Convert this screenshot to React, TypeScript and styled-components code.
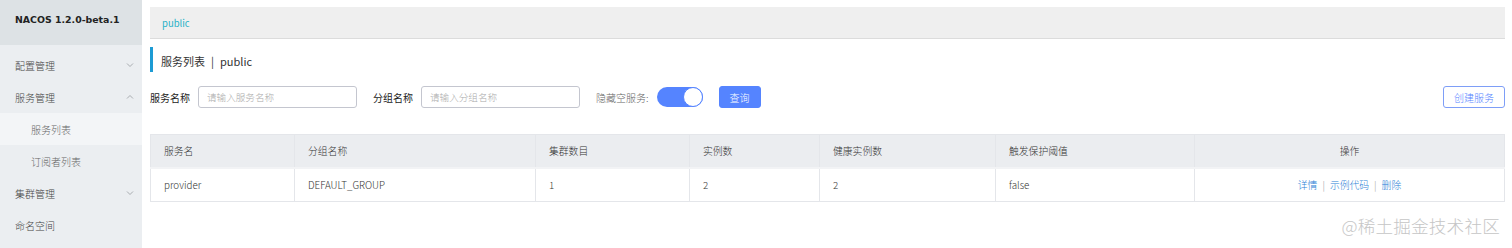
import React, { FC } from "react";
import styled, { createGlobalStyle } from "styled-components";

const colors = {
  text: "#333",
  muted: "#666",
  placeholder: "#aaa",
  primary: "#5584ff",
  link: "#2b7fd6",
  teal: "#27b1c7",
  accent: "#1d9bd4",
  border: "#e4e6ea",
};

const GlobalStyle = createGlobalStyle`
  html, body {
    margin: 0;
    padding: 0;
    height: 248px;
    overflow: hidden;
    background: #fff;
    font-family: "Noto Sans CJK SC", "Noto Sans", sans-serif;
    color: ${colors.text};
  }
  * { box-sizing: border-box; }
`;

const Styled = {
  Page: styled.div`
    position: relative;
    display: flex;
    height: 248px;
  `,
  Sidebar: {
    Base: styled.aside`
      width: 142px;
      flex-shrink: 0;
      background: #ebeef1;
    `,
    Brand: styled.div`
      height: 45px;
      padding: 14px 0 0 15px;
      background: #dde2e5;
      font-family: "DejaVu Sans", sans-serif;
      font-weight: bold;
      font-size: 9.4px;
      color: #222;
    `,
    Menu: styled.ul`
      list-style: none;
      margin: 0;
      padding: 4px 0 0;
    `,
    Item: styled.li<{ $sub?: boolean; $active?: boolean }>`
      display: flex;
      align-items: center;
      justify-content: space-between;
      height: 32px;
      padding: 0 8px 0 ${(p) => (p.$sub ? 31 : 15)}px;
      font-size: 10px;
      font-weight: 300;
      color: ${(p) => (p.$sub ? colors.muted : "#444")};
      background: ${(p) => (p.$active ? "#f3f5f7" : "transparent")};
    `,
  },
  Main: styled.main`
    flex: 1;
    min-width: 0;
    padding: 7px 7px 0 8px;
  `,
  Breadcrumb: styled.div`
    display: flex;
    align-items: center;
    height: 32px;
    padding-left: 12px;
    background: #efefef;
    border-bottom: 1px solid #dcdcdc;
    font-size: 9.5px;
    color: ${colors.teal};
  `,
  Title: styled.h1`
    display: flex;
    align-items: center;
    gap: 6px;
    height: 25px;
    margin: 8px 0 14px;
    padding: 2px 0 0 8px;
    border-left: 3px solid ${colors.accent};
    font-size: 11px;
    font-weight: normal;
    color: ${colors.text};
  `,
  Form: {
    Row: styled.div`
      display: flex;
      align-items: center;
      justify-content: space-between;
      height: 22px;
      margin-bottom: 26px;
    `,
    Group: styled.div`
      display: flex;
      align-items: center;
      gap: 16px;
    `,
    Field: styled.label`
      display: flex;
      align-items: center;
      gap: 8px;
    `,
    Label: styled.span<{ $light?: boolean }>`
      font-size: 10px;
      font-weight: ${(p) => (p.$light ? 300 : 400)};
      color: ${(p) => (p.$light ? colors.muted : "#222")};
    `,
    Input: styled.input`
      width: 159px;
      height: 22px;
      padding: 0 8px;
      border: 1px solid #c4c6cf;
      border-radius: 3px;
      font-family: inherit;
      font-size: 9.6px;
      font-weight: 300;
      outline: none;
      &::placeholder {
        color: ${colors.placeholder};
      }
    `,
  },
  Switch: {
    Track: styled.span`
      display: flex;
      justify-content: flex-end;
      width: 46px;
      height: 20px;
      border-radius: 10px;
      background: ${colors.primary};
    `,
    Knob: styled.span`
      width: 20px;
      height: 20px;
      border-radius: 50%;
      background: #fff;
      border: 1px solid ${colors.primary};
    `,
  },
  Button: styled.button<{ $outline?: boolean }>`
    height: 22px;
    padding: 0 10px;
    border-radius: 3px;
    border: 1px solid ${(p) => (p.$outline ? "#7e9ef7" : colors.primary)};
    background: ${(p) => (p.$outline ? "#fff" : colors.primary)};
    color: ${(p) => (p.$outline ? colors.primary : "#fff")};
    font-family: inherit;
    font-size: 10px;
    font-weight: 300;
  `,
  Table: {
    Base: styled.table`
      width: 100%;
      border-collapse: collapse;
      table-layout: fixed;
      border: 1px solid ${colors.border};
      font-size: 9.8px;
      font-weight: 300;
      color: ${colors.text};
    `,
    Head: styled.th<{ $center?: boolean }>`
      height: 33px;
      padding: 0 13px;
      text-align: ${(p) => (p.$center ? "center" : "left")};
      font-weight: 300;
      background: #ebedf0;
      border: 1px solid ${colors.border};
      border-bottom: 2px solid #f2f3f5;
    `,
    Cell: styled.td<{ $center?: boolean }>`
      height: 34px;
      padding: 0 13px;
      text-align: ${(p) => (p.$center ? "center" : "left")};
      border: 1px solid ${colors.border};
    `,
  },
  Link: styled.a`
    color: ${colors.link};
    text-decoration: none;
  `,
  Sep: styled.span`
    margin: 0 5px;
    color: #999;
  `,
  Watermark: styled.div`
    position: absolute;
    right: 12px;
    bottom: 10px;
    font-size: 17.6px;
    font-weight: 300;
    color: #c6c6c6;
    letter-spacing: 0.2px;
  `,
};

const Chevron: FC<{ up?: boolean }> = ({ up }) => (
  <svg width="8" height="6" viewBox="0 0 8 6">
    <polyline
      points={up ? "1,4.5 4,1.5 7,4.5" : "1,1.5 4,4.5 7,1.5"}
      fill="none"
      stroke="#a0a4a8"
      strokeWidth="0.9"
    />
  </svg>
);

const menu = [
  { label: "配置管理", chevron: "down" },
  { label: "服务管理", chevron: "up" },
  { label: "服务列表", sub: true, active: true },
  { label: "订阅者列表", sub: true },
  { label: "集群管理", chevron: "down" },
  { label: "命名空间" },
];

const columns = [
  { label: "服务名", width: 144 },
  { label: "分组名称", width: 241 },
  { label: "集群数目", width: 154 },
  { label: "实例数", width: 130 },
  { label: "健康实例数", width: 176 },
  { label: "触发保护阈值", width: 199 },
  { label: "操作", center: true },
];

const row = ["provider", "DEFAULT_GROUP", "1", "2", "2", "false"];

const App: FC = () => {
  return (
    <>
      <GlobalStyle />
      <Styled.Page>
        <Styled.Sidebar.Base>
          <Styled.Sidebar.Brand>NACOS 1.2.0-beta.1</Styled.Sidebar.Brand>
          <Styled.Sidebar.Menu>
            {menu.map((item) => (
              <Styled.Sidebar.Item
                key={item.label}
                $sub={item.sub}
                $active={item.active}
              >
                <span>{item.label}</span>
                {item.chevron && <Chevron up={item.chevron === "up"} />}
              </Styled.Sidebar.Item>
            ))}
          </Styled.Sidebar.Menu>
        </Styled.Sidebar.Base>

        <Styled.Main>
          <Styled.Breadcrumb>public</Styled.Breadcrumb>
          <Styled.Title>
            <span>服务列表</span>
            <span>|</span>
            <span>public</span>
          </Styled.Title>

          <Styled.Form.Row>
            <Styled.Form.Group>
              <Styled.Form.Field>
                <Styled.Form.Label>服务名称</Styled.Form.Label>
                <Styled.Form.Input placeholder="请输入服务名称" />
              </Styled.Form.Field>
              <Styled.Form.Field>
                <Styled.Form.Label>分组名称</Styled.Form.Label>
                <Styled.Form.Input placeholder="请输入分组名称" />
              </Styled.Form.Field>
              <Styled.Form.Field>
                <Styled.Form.Label $light>隐藏空服务:</Styled.Form.Label>
                <Styled.Switch.Track>
                  <Styled.Switch.Knob />
                </Styled.Switch.Track>
              </Styled.Form.Field>
              <Styled.Button>查询</Styled.Button>
            </Styled.Form.Group>
            <Styled.Button $outline>创建服务</Styled.Button>
          </Styled.Form.Row>

          <Styled.Table.Base>
            <colgroup>
              {columns.map((c) => (
                <col key={c.label} style={c.width ? { width: c.width } : undefined} />
              ))}
            </colgroup>
            <thead>
              <tr>
                {columns.map((c) => (
                  <Styled.Table.Head key={c.label} $center={c.center}>
                    {c.label}
                  </Styled.Table.Head>
                ))}
              </tr>
            </thead>
            <tbody>
              <tr>
                {row.map((v, i) => (
                  <Styled.Table.Cell key={i}>{v}</Styled.Table.Cell>
                ))}
                <Styled.Table.Cell $center>
                  <Styled.Link>详情</Styled.Link>
                  <Styled.Sep>|</Styled.Sep>
                  <Styled.Link>示例代码</Styled.Link>
                  <Styled.Sep>|</Styled.Sep>
                  <Styled.Link>删除</Styled.Link>
                </Styled.Table.Cell>
              </tr>
            </tbody>
          </Styled.Table.Base>
        </Styled.Main>

        <Styled.Watermark>@稀土掘金技术社区</Styled.Watermark>
      </Styled.Page>
    </>
  );
};

export default App;
